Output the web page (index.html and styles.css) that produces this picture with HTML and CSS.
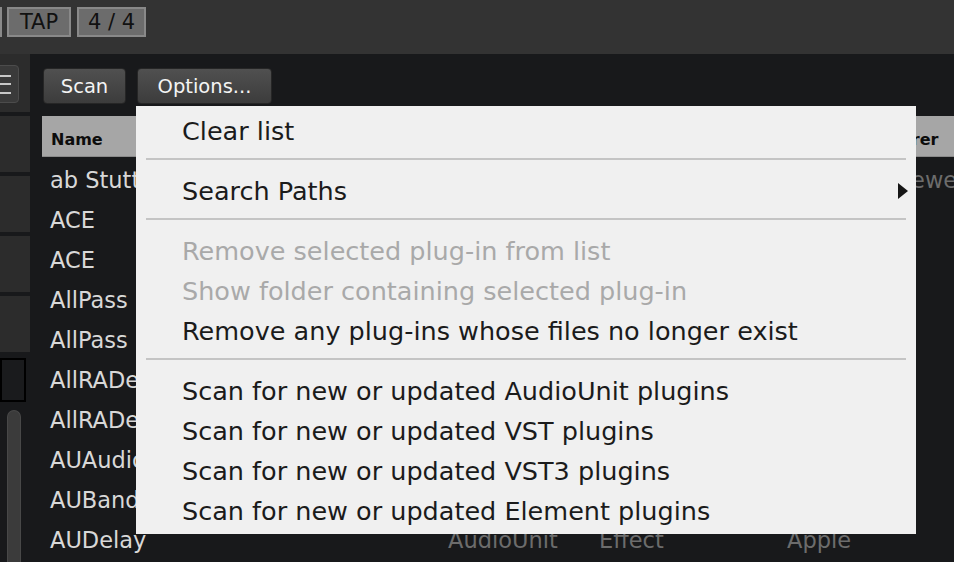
FILE: index.html
```html
<!DOCTYPE html>
<html>
<head>
<meta charset="utf-8">
<link rel="stylesheet" href="styles.css">
</head>
<body>
<div class="app">
  <header class="topbar">
    <div class="tbtn tbtn-cut"></div>
    <div class="tbtn tap">TAP</div>
    <div class="tbtn sig">4 / 4</div>
  </header>
  <div class="main">
    <aside class="side">
      <div class="blk blk-top">
        <div class="menu-btn"><span></span><span></span><span></span></div>
      </div>
      <div class="blk"></div>
      <div class="blk"></div>
      <div class="blk"></div>
      <div class="blk"></div>
      <div class="outline"></div>
      <div class="track"></div>
    </aside>
    <section class="content">
      <div class="toolbar">
        <button class="btn scan">Scan</button>
        <button class="btn options">Options...</button>
      </div>
      <div class="table">
        <div class="row head">
          <div class="c">Name</div>
          <div class="c">Format</div>
          <div class="c">Category</div>
          <div class="c mfr">Manufacturer</div>
        </div>
        <div class="row"><div class="c name">ab Stutter</div><div class="c">VST3</div><div class="c">Effect</div><div class="c">Ai Audio Brewers</div></div>
        <div class="row"><div class="c name">ACE</div><div class="c">AudioUnit</div><div class="c">Effect</div><div class="c">Apple</div></div>
        <div class="row"><div class="c name">ACE</div><div class="c">VST3</div><div class="c">Effect</div><div class="c">Apple</div></div>
        <div class="row"><div class="c name">AllPass</div><div class="c">AudioUnit</div><div class="c">Effect</div><div class="c">Apple</div></div>
        <div class="row"><div class="c name">AllPass</div><div class="c">VST3</div><div class="c">Effect</div><div class="c">Apple</div></div>
        <div class="row"><div class="c name">AllRADecoder</div><div class="c">AudioUnit</div><div class="c">Effect</div><div class="c">IEM</div></div>
        <div class="row"><div class="c name">AllRADecoder</div><div class="c">VST3</div><div class="c">Effect</div><div class="c">IEM</div></div>
        <div class="row"><div class="c name">AUAudioFilePlayer</div><div class="c">AudioUnit</div><div class="c">Generator</div><div class="c">Apple</div></div>
        <div class="row"><div class="c name">AUBandpass</div><div class="c">AudioUnit</div><div class="c">Effect</div><div class="c">Apple</div></div>
        <div class="row"><div class="c name">AUDelay</div><div class="c">AudioUnit</div><div class="c">Effect</div><div class="c">Apple</div></div>
      </div>
    </section>
  </div>

  <div class="popup">
    <div class="item">Clear list</div>
    <div class="sep"></div>
    <div class="item sub">Search Paths<span class="arrow"></span></div>
    <div class="sep"></div>
    <div class="item disabled">Remove selected plug-in from list</div>
    <div class="item disabled">Show folder containing selected plug-in</div>
    <div class="item">Remove any plug-ins whose files no longer exist</div>
    <div class="sep"></div>
    <div class="item">Scan for new or updated AudioUnit plugins</div>
    <div class="item">Scan for new or updated VST plugins</div>
    <div class="item">Scan for new or updated VST3 plugins</div>
    <div class="item">Scan for new or updated Element plugins</div>
  </div>
</div>
</body>
</html>
```

FILE: styles.css
```css
html, body {
  margin: 0;
  padding: 0;
  width: 954px;
  height: 562px;
  overflow: hidden;
  background: #18191b;
  font-family: "DejaVu Sans", "Liberation Sans", sans-serif;
}

.app {
  position: relative;
  width: 954px;
  height: 562px;
  overflow: hidden;
}

/* top bar */
.topbar {
  height: 54px;
  box-sizing: border-box;
  background: #333333;
  display: flex;
  align-items: flex-start;
  padding-top: 7px;
}

.tbtn {
  height: 30px;
  box-sizing: border-box;
  border: 2px solid #898989;
  background: #6c6c6c;
  color: #111;
  font-size: 21px;
  display: flex;
  align-items: center;
  justify-content: center;
  flex: none;
}

.tbtn-cut {
  width: 20px;
  margin-left: -18px;
  margin-right: 5px;
}

.tap {
  width: 64px;
  margin-right: 6px;
}

.sig {
  width: 69px;
}

/* main area */
.main {
  display: flex;
  height: 508px;
}

.side {
  width: 30px;
  flex: none;
  display: flex;
  flex-direction: column;
  gap: 4px;
  overflow: hidden;
}

.blk {
  height: 56px;
  flex: none;
  background: #2c2c2c;
}

.blk-top {
  height: 58px;
  box-sizing: border-box;
  padding-top: 11px;
}

.menu-btn {
  width: 30px;
  height: 38px;
  margin-left: -11px;
  box-sizing: border-box;
  border: 1px solid #4c4c4c;
  border-radius: 4px;
  background: #3a3a3a;
  display: flex;
  flex-direction: column;
  align-items: flex-end;
  justify-content: center;
  gap: 6.5px;
  padding-right: 7px;
}

.menu-btn span {
  display: block;
  width: 16px;
  height: 2px;
  background: #c8c8c8;
}

.outline {
  flex: none;
  margin-top: 2px;
  width: 26px;
  height: 44px;
  box-sizing: border-box;
  border: 2px solid #000;
  background: #1a1b1d;
}

.track {
  flex: 1;
  margin-top: 4px;
  margin-left: 7px;
  width: 14px;
  box-sizing: border-box;
  border: 1px solid #484848;
  border-bottom: none;
  border-radius: 7px 7px 0 0;
  background: #3b3b3b;
}

.content {
  flex: 1;
  margin-left: 12px;
  display: flex;
  flex-direction: column;
  min-width: 0;
}

.toolbar {
  display: flex;
  gap: 11px;
  padding-top: 14px;
  padding-left: 1px;
}

.btn {
  height: 36px;
  box-sizing: border-box;
  border: 1px solid #262626;
  border-radius: 4px;
  background: linear-gradient(#505050, #3c3c3c);
  color: #f4f4f4;
  font-family: "DejaVu Sans", sans-serif;
  font-size: 19.5px;
  padding: 0;
}

.scan { width: 83px; }
.options { width: 135px; }

.table {
  margin-top: 12px;
}

.row {
  display: grid;
  grid-template-columns: 398px 151px 188px 1fr;
  height: 40px;
  line-height: 40px;
  font-size: 22.5px;
  color: #6c6c6c;
  white-space: nowrap;
}

.row .c {
  padding-left: 8px;
  overflow: hidden;
}

.row .name {
  color: #d8d8d8;
}

.row.head {
  height: 41px;
  box-sizing: border-box;
  padding-top: 6px;
  line-height: 35px;
  margin-bottom: 3px;
  background: #a6a6a6;
  border-bottom: 1px solid #8a8a8a;
  color: #0c0c0c;
  font-size: 16px;
  font-weight: bold;
}

.row.head .c {
  padding-left: 9px;
}

.row.head .mfr {
  padding-left: 37px;
}

/* popup menu */
.popup {
  position: absolute;
  left: 136px;
  top: 106px;
  width: 780px;
  height: 428px;
  box-sizing: border-box;
  padding: 5px 0 3px;
  background: #f0f0f0;
  color: #1b1b1b;
  font-size: 25.5px;
}

.item {
  height: 40px;
  line-height: 40px;
  padding-left: 46px;
  padding-right: 8px;
  display: flex;
  align-items: center;
  justify-content: space-between;
  white-space: nowrap;
}

.item.disabled {
  color: #a9a9a9;
}

.sep {
  height: 20px;
  box-sizing: border-box;
  padding-top: 7px;
}

.sep::before {
  content: "";
  display: block;
  height: 2px;
  margin: 0 10px;
  background: #c4c4c4;
}

.arrow {
  width: 0;
  height: 0;
  border-left: 10px solid #161616;
  border-top: 8px solid transparent;
  border-bottom: 8px solid transparent;
}
```
